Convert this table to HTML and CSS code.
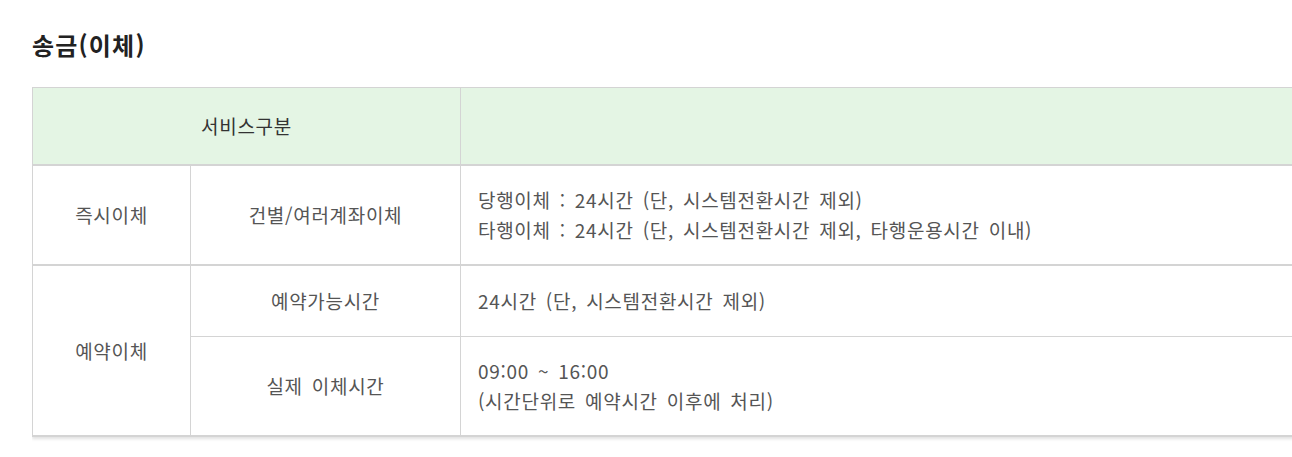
FILE: index.html
```html
<!DOCTYPE html>
<html lang="ko">
<head>
<meta charset="utf-8">
<title>송금(이체)</title>
<link rel="stylesheet" href="styles.css">
</head>
<body>
<div class="page">
  <h2 class="title">송금(이체)</h2>
  <div class="table-wrap">
    <table class="svc">
      <colgroup>
        <col class="c1">
        <col class="c2">
        <col class="c3">
      </colgroup>
      <thead>
        <tr>
          <th colspan="2">서비스구분</th>
          <th></th>
        </tr>
      </thead>
      <tbody>
        <tr class="r1">
          <td>즉시이체</td>
          <td>건별/여러계좌이체</td>
          <td class="desc">당행이체 : 24시간 (단, 시스템전환시간 제외)<br>타행이체 : 24시간 (단, 시스템전환시간 제외, 타행운용시간 이내)</td>
        </tr>
        <tr class="r2">
          <td rowspan="2" class="last">예약이체</td>
          <td>예약가능시간</td>
          <td class="desc">24시간 (단, 시스템전환시간 제외)</td>
        </tr>
        <tr class="r3">
          <td>실제 이체시간</td>
          <td class="desc">09:00 ~ 16:00<br>(시간단위로 예약시간 이후에 처리)</td>
        </tr>
      </tbody>
    </table>
  </div>
</div>
</body>
</html>
```

FILE: styles.css
```css
html, body {
  margin: 0;
  padding: 0;
  background: #ffffff;
  overflow: hidden;
}

.page {
  padding: 30px 0 0 32px;
  font-family: "Noto Sans CJK KR", "Noto Sans", sans-serif;
}

.title {
  margin: 0;
  font-size: 24px;
  line-height: 30px;
  font-weight: 700;
  color: #222222;
  letter-spacing: 1.2px;
}

.table-wrap {
  margin-top: 27px;
  padding-bottom: 6px;
  overflow: hidden;
}

.svc {
  width: 1400px;
  table-layout: fixed;
  border-collapse: collapse;
  border-top: 1px solid #d4d4d4;
  border-left: 1px solid #d4d4d4;
  border-bottom: 2px solid #d4d4d4;
  box-shadow: 0 2px 3px rgba(0, 0, 0, 0.12);
  font-size: 19px;
  letter-spacing: 0.7px;
  word-spacing: 3px;
  color: #555555;
}

.c1 { width: 158px; }
.c2 { width: 270px; }

.svc th,
.svc td {
  padding: 0;
  text-align: center;
  vertical-align: middle;
  border-left: 1px solid #d4d4d4;
  line-height: 30px;
  font-weight: 400;
}

.svc th {
  height: 76px;
  background: #e4f5e4;
  color: #333333;
  border-bottom: 2px solid #d4d4d4;
}

.svc td.desc {
  text-align: left;
  padding-left: 17px;
}

.r1 td {
  height: 98px;
  border-bottom: 2px solid #d4d4d4;
}

.r2 td {
  height: 70px;
  border-bottom: 1px solid #d4d4d4;
}

.r3 td {
  height: 98px;
}
```
